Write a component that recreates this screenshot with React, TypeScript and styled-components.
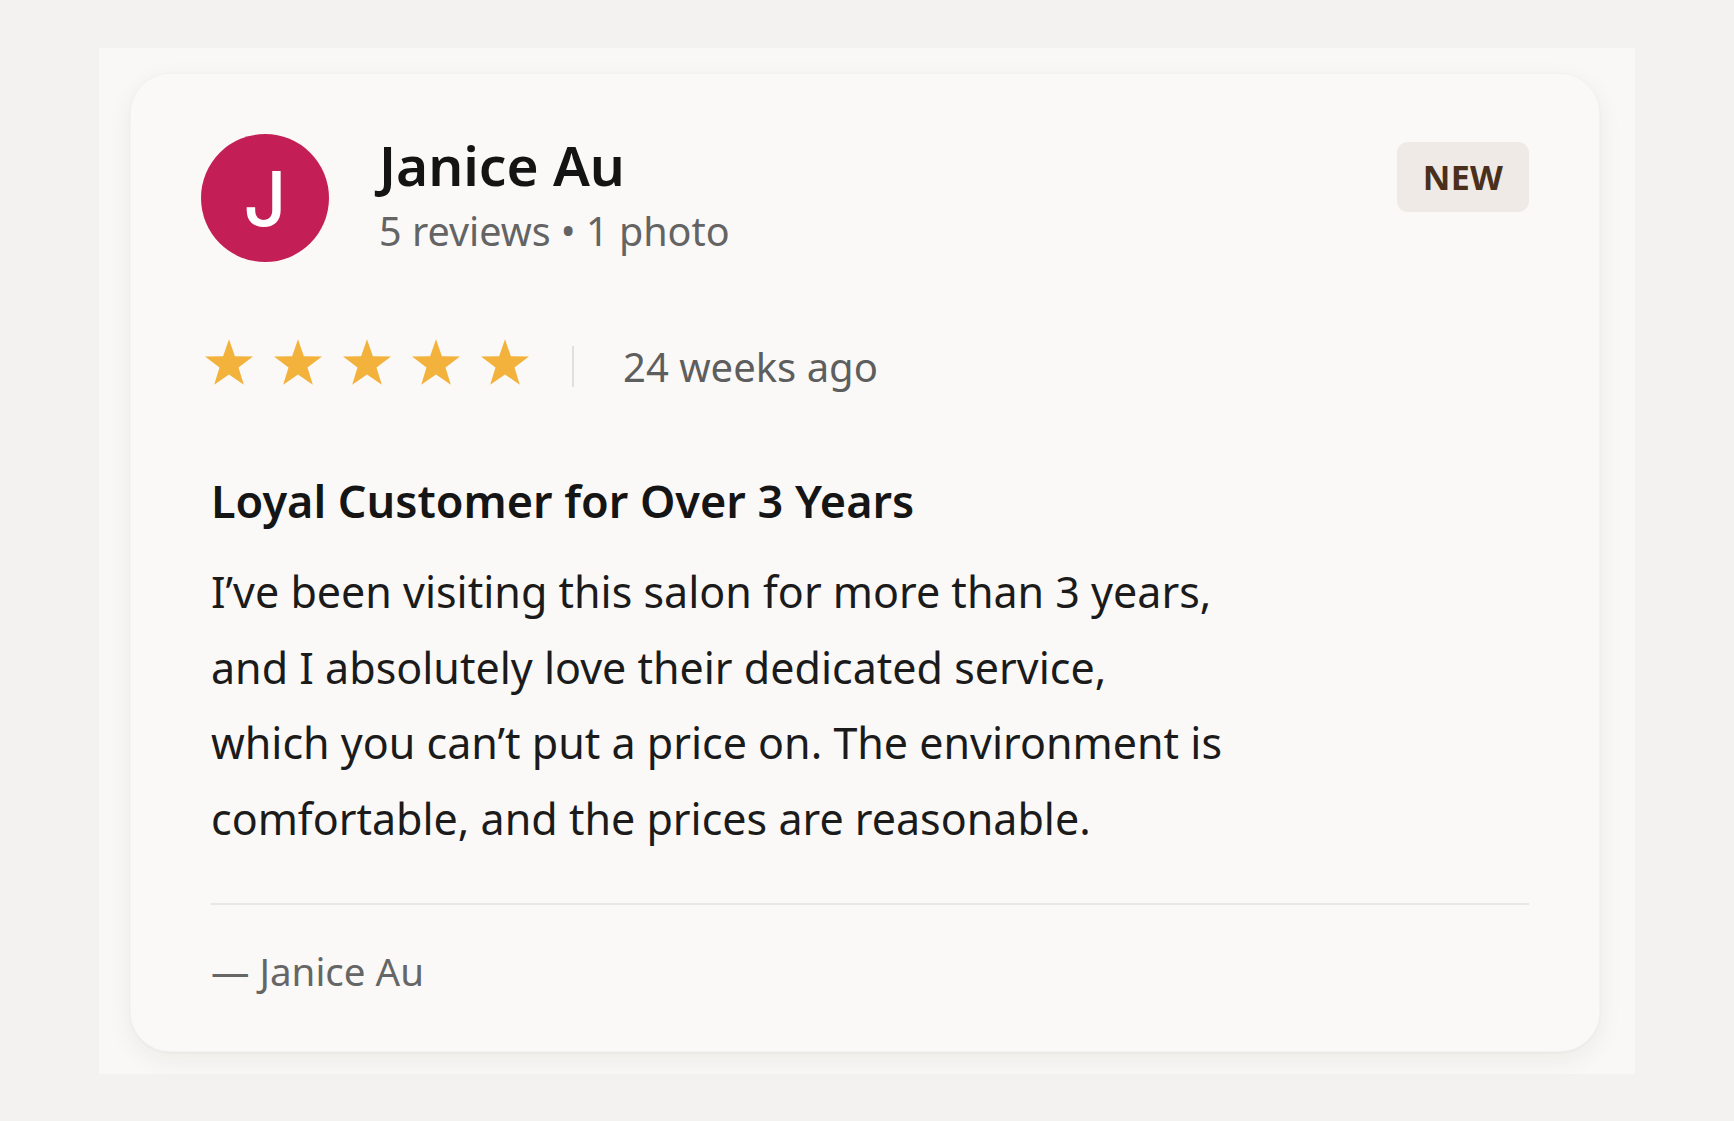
import React from "react";
import styled, { createGlobalStyle } from "styled-components";

const GlobalStyle = createGlobalStyle`
  * { box-sizing: border-box; }
  html, body {
    margin: 0;
    padding: 0;
    background: #f3f2f0;
  }
  body {
    font-family: "Noto Sans", "Open Sans", Arial, sans-serif;
    color: #161616;
    -webkit-font-smoothing: antialiased;
  }
`;

const Page = styled.main`
  min-height: 1121px;
  padding: 48px 0 0 99px;
`;

const Panel = styled.section`
  width: 1536px;
  padding: 25px 35px 22px 31px;
  background: #f9f8f6;
`;

const Card = styled.article`
  width: 1470px;
  padding: 60px 70px 56px 70px;
  background: #faf9f7;
  border-radius: 40px;
  border: 1px solid rgba(0, 0, 0, 0.025);
  box-shadow: 0 8px 26px rgba(40, 30, 20, 0.06), 0 1px 3px rgba(40, 30, 20, 0.04);
`;

const Header = styled.header`
  display: flex;
  align-items: flex-start;
`;

const Avatar = styled.div<{ $color: string }>`
  flex: none;
  width: 128px;
  height: 128px;
  border-radius: 50%;
  background: ${(p) => p.$color};
  color: #ffffff;
  display: flex;
  align-items: center;
  justify-content: center;
  font-family: Inter, "Noto Sans", sans-serif;
  font-weight: 500;
  font-size: 75px;
  line-height: 1;
`;

const Identity = styled.div`
  margin-left: 50px;
  display: flex;
  flex-direction: column;
`;

const Name = styled.h2`
  margin: 0;
  font-size: 55px;
  font-weight: 600;
  line-height: 61px;
  color: #141414;
`;

const Meta = styled.p`
  margin: 10px 0 0;
  font-size: 39.5px;
  font-weight: 400;
  line-height: 52px;
  color: #646464;
`;

const Badge = styled.span`
  margin-left: auto;
  margin-top: 8px;
  height: 70px;
  padding: 0 26px;
  display: inline-flex;
  align-items: center;
  border-radius: 11px;
  background: #efeae5;
  color: #4a2f1d;
  font-size: 34px;
  font-weight: 700;
  letter-spacing: 0.2px;
`;

const RatingRow = styled.div`
  margin-top: 77px;
  padding-left: 4px;
  height: 48px;
  display: flex;
  align-items: center;
`;

const Stars = styled.div`
  display: flex;
  gap: 21px;
`;

const StarIcon = styled.svg`
  display: block;
  width: 48px;
  height: 48px;
  fill: #f3b23b;
`;

const Divider = styled.span`
  width: 2px;
  height: 41px;
  margin: 7px 49px 0 43px;
  background: #e2e0dc;
`;

const Age = styled.span`
  padding-top: 7px;
  font-size: 40px;
  line-height: 52px;
  color: #5e5e5e;
`;

const Body = styled.div`
  padding-left: 10px;
`;

const Title = styled.h3`
  margin: 86px 0 0;
  font-size: 45px;
  font-weight: 600;
  line-height: 56px;
  color: #151515;
`;

const Text = styled.p`
  margin: 25px 0 0;
  max-width: 1016px;
  font-size: 43px;
  line-height: 75.5px;
  color: #1b1b1b;
`;

const Rule = styled.hr`
  margin: 47px 0 0;
  height: 2px;
  border: 0;
  background: #e9e7e3;
`;

const Signature = styled.p`
  margin: 42px 0 0;
  font-size: 38.5px;
  line-height: 48px;
  color: #666666;
`;

const starPoints = (() => {
  const cx = 24;
  const cy = 25.4;
  const outer = 25.2;
  const inner = 10;
  const pts: string[] = [];
  for (let i = 0; i < 10; i++) {
    const r = i % 2 === 0 ? outer : inner;
    const a = -Math.PI / 2 + (i * Math.PI) / 5;
    pts.push(`${(cx + r * Math.cos(a)).toFixed(2)},${(cy + r * Math.sin(a)).toFixed(2)}`);
  }
  return pts.join(" ");
})();

const Star = () => (
  <StarIcon viewBox="0 0 48 48" aria-hidden="true">
    <polygon points={starPoints} />
  </StarIcon>
);

const review = {
  name: "Janice Au",
  initial: "J",
  reviews: 5,
  photos: 1,
  rating: 5,
  age: "24 weeks ago",
  title: "Loyal Customer for Over 3 Years",
  text:
    "I’ve been visiting this salon for more than 3 years, and I absolutely love their dedicated service, which you can’t put a price on. The environment is comfortable, and the prices are reasonable.",
};

export default function App() {
  return (
    <>
      <GlobalStyle />
      <Page>
        <Panel>
          <Card>
            <Header>
              <Avatar $color="#c31f56">{review.initial}</Avatar>
              <Identity>
                <Name>{review.name}</Name>
                <Meta>
                  {review.reviews} reviews • {review.photos} photo
                </Meta>
              </Identity>
              <Badge>NEW</Badge>
            </Header>
            <RatingRow>
              <Stars aria-label={`${review.rating} out of 5 stars`}>
                {Array.from({ length: review.rating }, (_, i) => (
                  <Star key={i} />
                ))}
              </Stars>
              <Divider />
              <Age>{review.age}</Age>
            </RatingRow>
            <Body>
              <Title>{review.title}</Title>
              <Text>{review.text}</Text>
              <Rule />
              <Signature>— {review.name}</Signature>
            </Body>
          </Card>
        </Panel>
      </Page>
    </>
  );
}
